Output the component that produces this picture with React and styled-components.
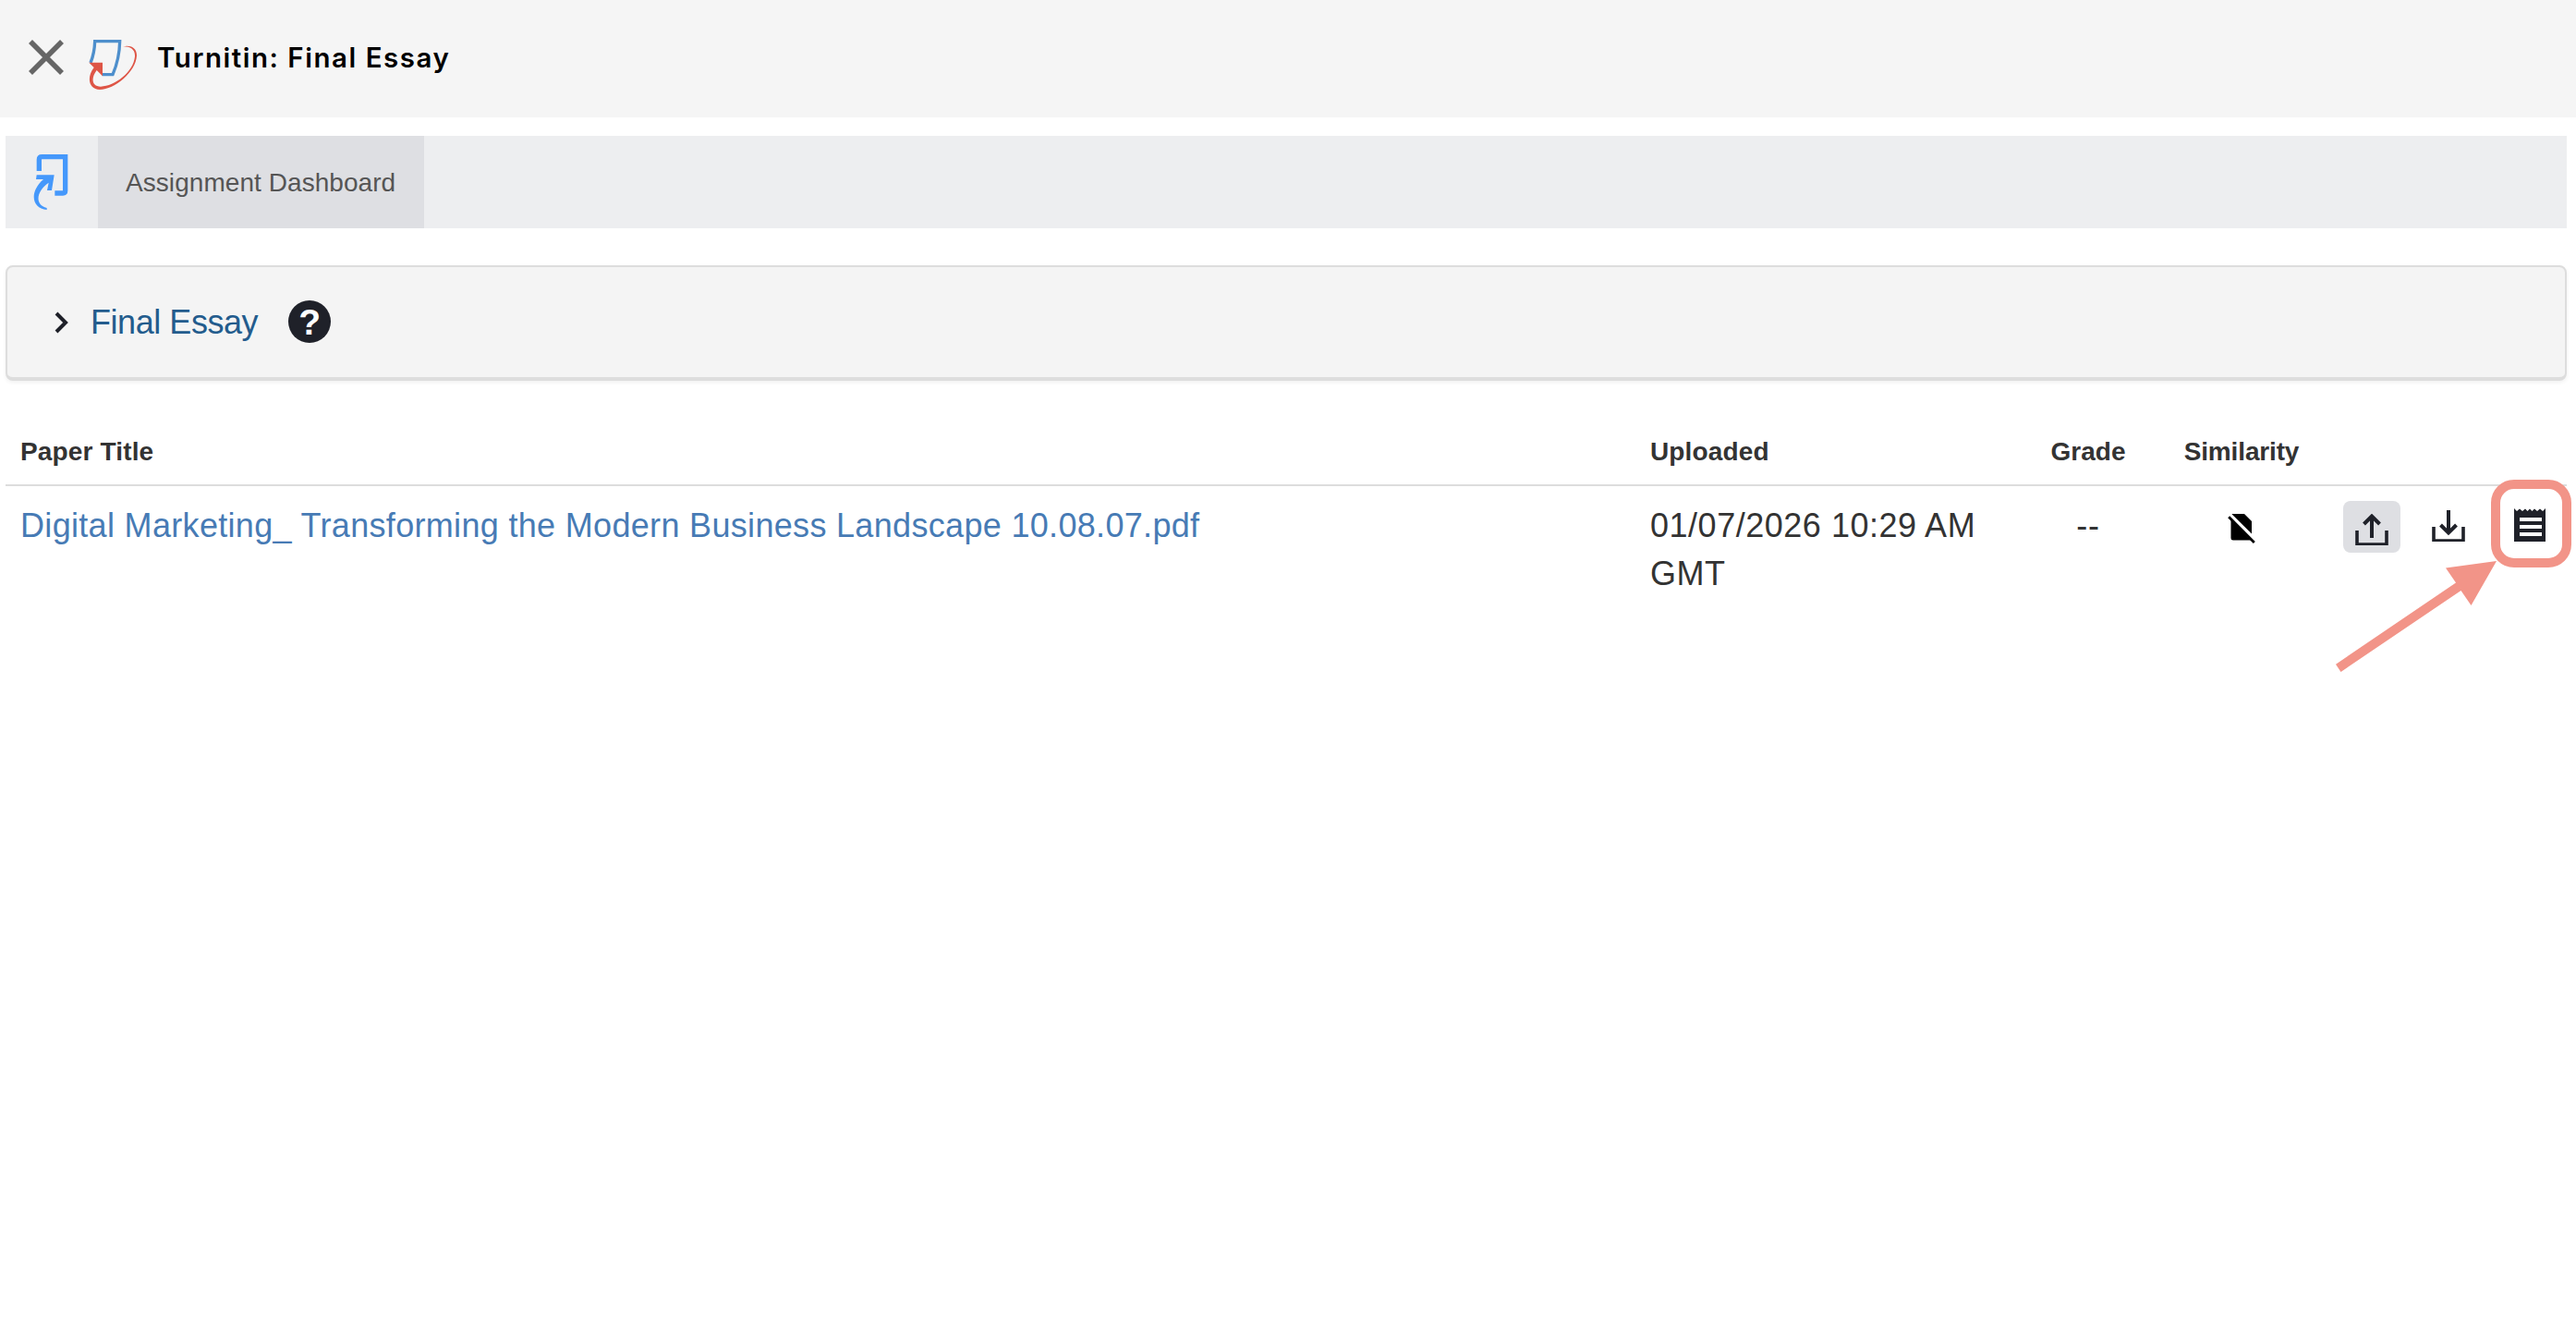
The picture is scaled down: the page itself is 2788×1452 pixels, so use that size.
import React from "react";
import styled, { createGlobalStyle } from "styled-components";

const GlobalStyle = createGlobalStyle`
  * {
    box-sizing: border-box;
  }
  body {
    margin: 0;
    background: #fff;
    color: #333;
    font-family: "Liberation Sans", Arial, sans-serif;
    font-size: 36px;
  }
`;

const Page = styled.div`
  position: relative;
  height: 1452px;
  overflow: hidden;
`;

const Header = styled.header`
  display: flex;
  align-items: flex-start;
  height: 127px;
  padding: 42px 30px 0;
  background: #f5f5f5;
`;
const CloseButton = styled.button`
  display: flex;
  width: 40px;
  height: 40px;
  margin-right: 26px;
  padding: 0;
  border: 0;
  background: none;
`;
const Title = styled.h1`
  margin: 0 0 0 21px;
  color: #000;
  font: 600 29.5px/41px Inter, sans-serif;
  letter-spacing: 1.52px;
`;

const Content = styled.main`
  padding: 20px 10px 0 6px;
`;
const NavBar = styled.nav`
  display: flex;
  height: 100px;
  background: #edeef0;
`;
const NavLogo = styled.div`
  width: 100px;
  padding: 19px 30px;
`;
const Tab = styled.div`
  display: flex;
  align-items: center;
  width: 353px;
  padding: 2px 0 0 30px;
  background: #dedfe3;
  color: #555;
  font-size: 28px;
  letter-spacing: 0.06px;
  white-space: nowrap;
`;

const Panel = styled.section`
  display: flex;
  align-items: center;
  height: 125px;
  margin-top: 40px;
  padding-left: 50px;
  border: 2px solid #ddd;
  border-bottom-width: 4px;
  border-radius: 8px;
  background: #f4f4f4;
  box-shadow: 0 2px 4px rgba(0, 0, 0, 0.06);
`;
const PanelTitle = styled.a`
  margin-left: 22px;
  color: #235c8d;
  letter-spacing: -0.45px;
`;
const Help = styled.span`
  display: flex;
  justify-content: center;
  width: 46px;
  height: 46px;
  margin: -2px 0 0 33px;
  border-radius: 50%;
  background: #1f2129;
  color: #fff;
  font-size: 39px;
  font-weight: bold;
  line-height: 47px;
`;

const Row = styled.div`
  display: grid;
  grid-template-columns: 1764px 402px 176px 156px 1fr;
`;
const HeadRow = styled(Row)`
  height: 114px;
  padding-top: 61px;
  border-bottom: 2px solid #ddd;
  font-size: 28px;
  font-weight: bold;
  line-height: 32px;
`;
const BodyRow = styled(Row)`
  padding-top: 16px;
  line-height: 52px;
`;
const Cell = styled.div`
  padding-left: ${p => (p.$center ? 0 : 16)}px;
  padding-top: ${p => p.$top || 0}px;
  text-align: ${p => (p.$center ? "center" : "left")};
  letter-spacing: ${p => p.$spacing || 0}px;
  & svg {
    display: block;
    margin: 0 auto;
  }
`;
const PaperLink = styled.a`
  color: #477bb5;
  white-space: nowrap;
`;
const Actions = styled.div`
  display: flex;
  align-items: flex-start;
  padding-left: 32px;
`;
const Action = styled.button`
  display: flex;
  justify-content: center;
  width: 62px;
  height: 56px;
  margin-right: ${p => p.$gap || 0}px;
  padding: ${p => p.$top}px 0 0;
  border: 0;
  border-radius: 8px;
  background: ${p => (p.$active ? "#dedfe3" : "none")};
`;

const Highlight = styled.div`
  position: absolute;
  left: 2696px;
  top: 519px;
  width: 87px;
  height: 95px;
  border: 10px solid #f29488;
  border-radius: 25px;
`;
const Arrow = styled.svg`
  position: absolute;
  left: 2520px;
  top: 600px;
`;

const TurnitinLogo = () => (
  <svg width="53" height="56" viewBox="48 66 159 168" fill="none">
    <path
      d="M54 144Q67 112 68 74H149Q148 130 126 182H92"
      stroke="#4e8fcc"
      strokeWidth="10"
    />
    <path
      d="M159 91C181 85 205 94 204 121C201 174 132 231 84 231C50 231 39 194 65 159L49 143H93V187L74 168C55 193 57 221 87 221C133 220 193 174 198 124C200 99 181 90 159 91Z"
      fill="#de5546"
    />
  </svg>
);

const NavMark = () => (
  <svg width="38" height="62" viewBox="48 48 114 186" fill="none">
    <path
      d="M67 105V68Q67 59 76 59H152V169Q152 177 144 177H118"
      stroke="#4598fb"
      strokeWidth="16"
    />
    <path
      d="M59 118H116L108 168H93L98 143C62 166 48 214 92 225V231C44 227 33 174 81 132H57Z"
      fill="#4598fb"
    />
  </svg>
);

const SubmitIcon = () => (
  <svg width="36" height="34" viewBox="0 0 36 34" fill="none" stroke="#1f2129">
    <path d="M2 18V33H34V18" strokeWidth="3.6" />
    <path d="M18 26V3M9.5 11L18 2.5L26.5 11" strokeWidth="4" />
  </svg>
);

const DownloadIcon = () => (
  <svg width="36" height="34" viewBox="0 0 36 34" fill="none" stroke="#1f2129">
    <path d="M2 18V33H34V18" strokeWidth="3.6" />
    <path d="M18 0V24M9.5 16L18 24.5L26.5 16" strokeWidth="4" />
  </svg>
);

const ReceiptIcon = () => (
  <svg width="34" height="36" viewBox="0 0 34 36">
    <path
      d="M0 0L3 3L6 .5L9 3L12 .5L14.5 3L17 .5L19.5 3L22 .5L25 3L28 .5L31 3L34 0V36H0Z"
      fill="#1f2129"
    />
    <path d="M6 12H30M6 20H30M6 28H30" stroke="#fff" strokeWidth="4" />
  </svg>
);

const NoReportIcon = () => (
  <svg width="30" height="33" viewBox="0 0 30 33">
    <path d="M5 0H18L26 8V21.5L4.5 .3Z" />
    <path d="M3.5 6.5L25 28.5H6Q3.5 28.5 3.5 26Z" />
    <path d="M1.2 3.2L28.8 31" stroke="#000" strokeWidth="2.8" />
  </svg>
);

const App = () => (
  <Page>
    <GlobalStyle />
    <Header>
      <CloseButton aria-label="Close">
        <svg width="40" height="40" stroke="#666" strokeWidth="5.6">
          <path d="M3 3L37 37M37 3L3 37" />
        </svg>
      </CloseButton>
      <TurnitinLogo />
      <Title>Turnitin: Final Essay</Title>
    </Header>
    <Content>
      <NavBar>
        <NavLogo>
          <NavMark />
        </NavLogo>
        <Tab>Assignment Dashboard</Tab>
      </NavBar>
      <Panel>
        <svg width="18" height="24" fill="none" stroke="#1f2129">
          <path d="M3 2L13 12L3 22" strokeWidth="4" />
        </svg>
        <PanelTitle>Final Essay</PanelTitle>
        <Help>?</Help>
      </Panel>
      <HeadRow>
        <Cell $spacing={0.15}>Paper Title</Cell>
        <Cell $spacing={0.15}>Uploaded</Cell>
        <Cell $center>Grade</Cell>
        <Cell $center $spacing={-0.15}>
          Similarity
        </Cell>
      </HeadRow>
      <BodyRow>
        <Cell $top={1} $spacing={0.32}>
          <PaperLink>
            Digital Marketing_ Transforming the Modern Business Landscape
            10.08.07.pdf
          </PaperLink>
        </Cell>
        <Cell $top={1} $spacing={0.52}>
          01/07/2026 10:29 AM GMT
        </Cell>
        <Cell $top={1} $center $spacing={0.8}>
          --
        </Cell>
        <Cell $top={14} $center>
          <NoReportIcon />
        </Cell>
        <Actions>
          <Action $active $top={14} $gap={21}>
            <SubmitIcon />
          </Action>
          <Action $top={10} $gap={26}>
            <DownloadIcon />
          </Action>
          <Action $top={8}>
            <ReceiptIcon />
          </Action>
        </Actions>
      </BodyRow>
    </Content>
    <Highlight />
    <Arrow width="190" height="135">
      <path
        d="M8 118.7L138 30.5L127 14.5L182 7L154.5 55L143.5 39L13.5 127Z"
        fill="#f29488"
      />
    </Arrow>
  </Page>
);

export default App;
